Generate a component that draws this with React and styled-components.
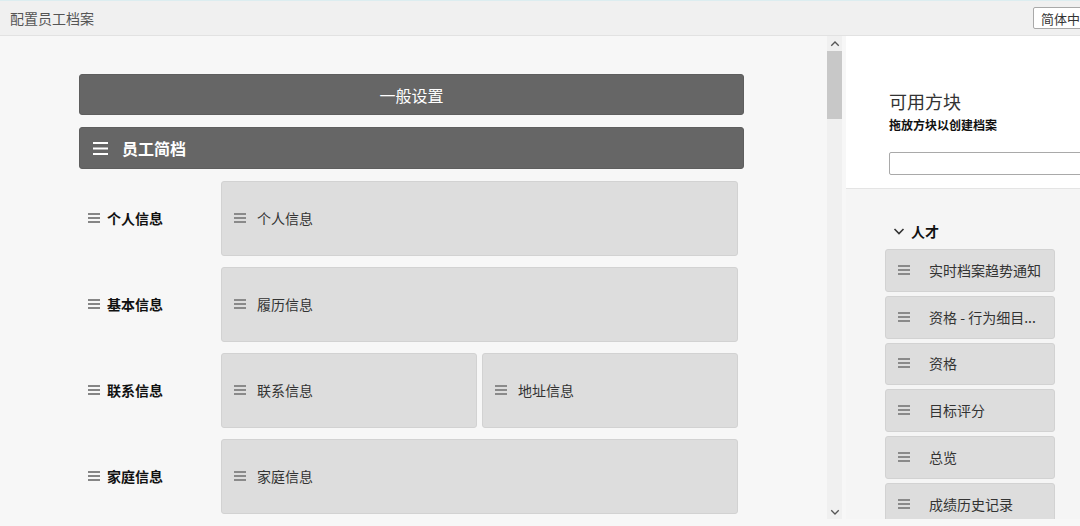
import React from "react";
import styled, { createGlobalStyle } from "styled-components";

const GlobalStyle = createGlobalStyle`
  html, body {
    margin: 0;
    padding: 0;
    overflow: hidden;
    background: #f7f7f7;
  }
  body {
    font-family: "Noto Sans CJK SC", "Noto Sans", "Liberation Sans", sans-serif;
  }
  * { box-sizing: border-box; }
`;

const Page = styled.div`
  width: 1080px;
  height: 526px;
  display: flex;
  flex-direction: column;
  background: #f7f7f7;
`;

const Header = styled.header`
  height: 36px;
  flex: none;
  display: flex;
  align-items: center;
  justify-content: space-between;
  padding-left: 10px;
  background: #f0f0f0;
  border-top: 1px solid #dcedf0;
  border-bottom: 1px solid #e2e2e2;
`;

const Title = styled.h1`
  margin: 0;
  font-size: 14px;
  font-weight: 400;
  color: #555;
`;

const LangSelect = styled.div`
  width: 80px;
  height: 22px;
  margin-right: -33px;
  display: flex;
  align-items: center;
  padding-left: 7px;
  font-size: 13px;
  color: #333;
  background: #fff;
  border: 1px solid #a9a9a9;
  border-radius: 2px;
  white-space: nowrap;
`;

const Main = styled.main`
  height: 483px;
  flex: none;
  display: flex;
`;

const Editor = styled.section`
  width: 827px;
  flex: none;
  padding: 38px 0 0 79px;
  overflow: hidden;
  background: #f7f7f7;
`;

const Canvas = styled.div`
  width: 665px;
  display: flex;
  flex-direction: column;
`;

const Bar = styled.div`
  height: ${(p) => p.$h}px;
  margin-bottom: 12px;
  display: flex;
  align-items: center;
  justify-content: ${(p) => (p.$center ? "center" : "flex-start")};
  padding-left: ${(p) => (p.$center ? 0 : 13)}px;
  gap: 14px;
  background: #666;
  border: 1px solid #5e5e5e;
  border-radius: 3px;
  color: #fff;
  font-size: 16px;
  font-weight: ${(p) => (p.$bold ? 700 : 400)};
`;

const Row = styled.div`
  height: 75px;
  margin-bottom: 11px;
  display: grid;
  grid-template-columns: 142px 1fr;
  padding-right: 6px;
`;

const RowLabel = styled.div`
  display: flex;
  align-items: center;
  gap: 7px;
  padding-left: 9px;
  padding-bottom: 1px;
  font-size: 14px;
  font-weight: 700;
  color: #111;
`;

const Slots = styled.div`
  display: flex;
  gap: 5px;
`;

const Block = styled.div`
  flex: 1;
  display: flex;
  align-items: center;
  gap: 11px;
  padding-left: 12px;
  padding-bottom: 1px;
  background: #dddddd;
  border: 1px solid #d2d2d2;
  border-radius: 3px;
  font-size: 14px;
  color: #333;
`;

const ScrollTrack = styled.div`
  width: 15px;
  flex: none;
  display: flex;
  flex-direction: column;
  align-items: center;
  background: #f0f0f0;
`;

const ScrollArrow = styled.div`
  height: 15px;
  width: 15px;
  display: flex;
  align-items: center;
  justify-content: center;
  color: #555;
`;

const ScrollThumb = styled.div`
  width: 15px;
  height: 68px;
  background: #c8c8c8;
`;

const ScrollRest = styled.div`
  flex: 1;
`;

const Palette = styled.aside`
  flex: 1;
  margin-left: 4px;
  display: flex;
  flex-direction: column;
  background: #f5f5f5;
  overflow: hidden;
`;

const PaletteHead = styled.div`
  height: 153px;
  flex: none;
  padding: 53px 0 0 43px;
  background: #fff;
  border-bottom: 1px solid #e4e4e4;
`;

const PaletteTitle = styled.h2`
  margin: 0;
  font-size: 18px;
  font-weight: 400;
  line-height: 24px;
  color: #333;
`;

const PaletteHint = styled.p`
  margin: 3px 0 0;
  font-size: 12px;
  font-weight: 700;
  line-height: 17px;
  color: #111;
`;

const Search = styled.input`
  display: block;
  margin-top: 19px;
  width: 200px;
  height: 23px;
  padding: 0;
  border: 1px solid #a9a9a9;
  border-radius: 2px;
  background: #fff;
  outline: none;
`;

const Group = styled.div`
  padding: 32px 0 0 39px;
  display: flex;
  flex-direction: column;
  gap: 4px;
`;

const GroupTitle = styled.div`
  display: flex;
  align-items: center;
  gap: 6px;
  height: 20px;
  padding-left: 8px;
  margin-bottom: 4px;
  font-size: 14px;
  font-weight: 700;
  color: #111;
`;

const Tile = styled.div`
  width: 170px;
  height: 42.8px;
  flex: none;
  display: flex;
  align-items: center;
  gap: 19px;
  padding-left: 12px;
  padding-bottom: 1px;
  background: #dddddd;
  border: 1px solid #d2d2d2;
  border-radius: 3px;
  font-size: 14px;
  color: #333;
  white-space: nowrap;
`;

const Grip = ({ color = "#555" }) => (
  <svg width="12" height="10" viewBox="0 0 12 10" style={{ flex: "none" }}>
    <g stroke={color} strokeWidth="1.4">
      <line x1="0" y1="1" x2="12" y2="1" />
      <line x1="0" y1="5" x2="12" y2="5" />
      <line x1="0" y1="9" x2="12" y2="9" />
    </g>
  </svg>
);

const BigGrip = () => (
  <svg width="15" height="13" viewBox="0 0 15 13" style={{ flex: "none" }}>
    <g stroke="#fff" strokeWidth="2">
      <line x1="0" y1="1" x2="15" y2="1" />
      <line x1="0" y1="6.5" x2="15" y2="6.5" />
      <line x1="0" y1="12" x2="15" y2="12" />
    </g>
  </svg>
);

const Chevron = ({ dir = "down", size = 12, color = "#333" }) => (
  <svg width={size} height={size} viewBox="0 0 12 12">
    <polyline
      points={dir === "down" ? "1.5,4 6,8.5 10.5,4" : "1.5,8 6,3.5 10.5,8"}
      fill="none"
      stroke={color}
      strokeWidth="1.6"
    />
  </svg>
);

const rows = [
  { label: "个人信息", blocks: ["个人信息"] },
  { label: "基本信息", blocks: ["履历信息"] },
  { label: "联系信息", blocks: ["联系信息", "地址信息"] },
  { label: "家庭信息", blocks: ["家庭信息"] },
];

const tiles = ["实时档案趋势通知", "资格 - 行为细目...", "资格", "目标评分", "总览", "成绩历史记录"];

export default function App() {
  return (
    <Page>
      <GlobalStyle />
      <Header>
        <Title>配置员工档案</Title>
        <LangSelect>简体中文</LangSelect>
      </Header>
      <Main>
        <Editor>
          <Canvas>
            <Bar $h={41} $center>一般设置</Bar>
            <Bar $h={42} $bold>
              <BigGrip />
              员工简档
            </Bar>
            {rows.map((r) => (
              <Row key={r.label}>
                <RowLabel>
                  <Grip />
                  {r.label}
                </RowLabel>
                <Slots>
                  {r.blocks.map((b) => (
                    <Block key={b}>
                      <Grip color="#666" />
                      {b}
                    </Block>
                  ))}
                </Slots>
              </Row>
            ))}
          </Canvas>
        </Editor>
        <ScrollTrack>
          <ScrollArrow>
            <Chevron dir="up" size={10} color="#555" />
          </ScrollArrow>
          <ScrollThumb />
          <ScrollRest />
          <ScrollArrow>
            <Chevron dir="down" size={10} color="#555" />
          </ScrollArrow>
        </ScrollTrack>
        <Palette>
          <PaletteHead>
            <PaletteTitle>可用方块</PaletteTitle>
            <PaletteHint>拖放方块以创建档案</PaletteHint>
            <Search type="text" />
          </PaletteHead>
          <Group>
            <GroupTitle>
              <Chevron dir="down" size={12} color="#333" />
              人才
            </GroupTitle>
            {tiles.map((t) => (
              <Tile key={t}>
                <Grip color="#666" />
                {t}
              </Tile>
            ))}
          </Group>
        </Palette>
      </Main>
    </Page>
  );
}
